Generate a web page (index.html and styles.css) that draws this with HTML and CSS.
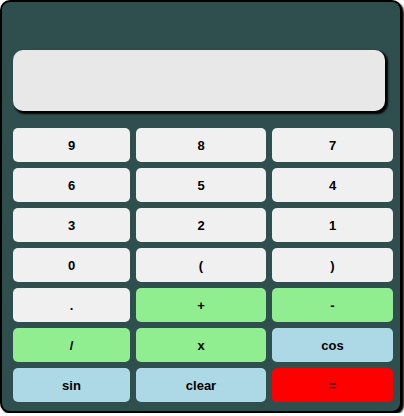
FILE: index.html
```html
<!DOCTYPE html>
<html lang="en">
<head>
    <meta charset="UTF-8">
    <title>Calculator</title>
    <link rel="stylesheet" href="styles.css">
</head>
<body>
    <div class="calculator">
        <div class="display" id="display"></div>
        <div class="keys">
            <button class="key">9</button>
            <button class="key">8</button>
            <button class="key">7</button>
            <button class="key">6</button>
            <button class="key">5</button>
            <button class="key">4</button>
            <button class="key">3</button>
            <button class="key">2</button>
            <button class="key">1</button>
            <button class="key">0</button>
            <button class="key">(</button>
            <button class="key">)</button>
            <button class="key">.</button>
            <button class="key op">+</button>
            <button class="key op">-</button>
            <button class="key op">/</button>
            <button class="key op">x</button>
            <button class="key fn">cos</button>
            <button class="key fn">sin</button>
            <button class="key fn">clear</button>
            <button class="key equals">=</button>
        </div>
    </div>
</body>
</html>
```

FILE: styles.css
```css
body {
    margin: 0;
    font-family: "Liberation Sans", Arial, sans-serif;
    background-color: #fff;
}
.calculator {
    width: 402px;
    height: 413px;
    box-sizing: border-box;
    border: 2px solid #000;
    border-radius: 10px;
    background-color: #2f4f4f;
    padding: 48px 0 0 11px;
    box-shadow: 2px 2px 2px #000;
}
.display {
    width: 372px;
    height: 61px;
    background-color: #e8e8e8;
    border-radius: 10px;
    box-shadow: 2px 2px 2px 1px #000;
    margin-bottom: 17px;
}
.keys {
    display: grid;
    grid-template-columns: 117px 130px 121px;
    grid-auto-rows: 34px;
    gap: 6px;
}
.key {
    border: none;
    border-radius: 5px;
    background-color: #f0f0f0;
    color: #000;
    font-family: "Liberation Sans", Arial, sans-serif;
    font-size: 13px;
    font-weight: bold;
    padding: 0;
    cursor: pointer;
}
.key.op {
    background-color: #90ee90;
}
.key.fn {
    background-color: #add8e6;
}
.key.equals {
    background-color: #ff0000;
}
```
